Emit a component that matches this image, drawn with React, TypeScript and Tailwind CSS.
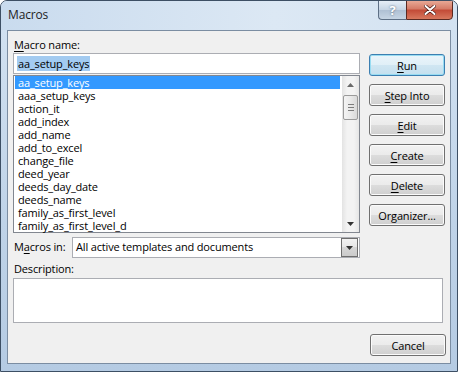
import React from 'react';

const items = [
  'aa_setup_keys',
  'aaa_setup_keys',
  'action_it',
  'add_index',
  'add_name',
  'add_to_excel',
  'change_file',
  'deed_year',
  'deeds_day_date',
  'deeds_name',
  'family_as_first_level',
  'family_as_first_level_d',
];

function U({ children }: { children: React.ReactNode }) {
  return <span className="underline decoration-1 underline-offset-[2px]">{children}</span>;
}

function Btn({ children, def }: { children: React.ReactNode; def?: boolean }) {
  return (
    <div
      className={
        def
          ? 'h-[22px] w-[76px] rounded-[3px] border border-[#3c7fb1] bg-[linear-gradient(to_bottom,#eaf5fb_0%,#e0eff7_50%,#d0e6f2_50%,#c4e0ef_100%)] shadow-[inset_0_0_0_1px_#98dcf2] flex items-center justify-center leading-none'
          : 'h-[22px] w-[76px] rounded-[3px] border border-[#707070] bg-[linear-gradient(to_bottom,#f2f2f2_0%,#ebebeb_50%,#dddddd_50%,#cfcfcf_100%)] shadow-[inset_0_0_0_1px_#fbfbfb] flex items-center justify-center leading-none'
      }
    >
      {children}
    </div>
  );
}

function ArrowDown() {
  return (
    <svg width="7" height="4" viewBox="0 0 7 4">
      <path d="M0 0 H7 L3.5 4 Z" fill="#333" />
    </svg>
  );
}

function ArrowUp() {
  return (
    <svg width="7" height="4" viewBox="0 0 7 4">
      <path d="M0 4 H7 L3.5 0 Z" fill="#6a6a6a" />
    </svg>
  );
}

export default function App() {
  return (
    <div className="w-[458px] h-[372px] overflow-hidden rounded-t-[7px] border border-[#3d4f64] bg-[linear-gradient(to_bottom,#d4e3f2,#bfd3e8_60%,#b5cbe3)] flex flex-col font-['Open_Sans',sans-serif] text-[11px] tracking-[-0.15px] text-black">
      {/* Title bar */}
      <div className="h-[29px] flex justify-between items-start bg-[linear-gradient(to_right,#c9dbee,#dce8f4_60%,#d3e2f1)]">
        <div className="pl-[7px] pt-[5px] text-[12px] leading-[18px] text-[#1e1e1e]">Macros</div>
        <div className="flex mr-[4px] -mt-[1px]">
          <div className="w-[28px] h-[20px] rounded-bl-[4px] border border-[#5d6f85] border-r-0 bg-[linear-gradient(to_bottom,#e6eef7,#c5d4e4_50%,#aebfd3_50%,#c6d5e4)] flex items-center justify-center text-[13px] font-bold text-white leading-none [text-shadow:0_0_2px_#4a5c70]">
            ?
          </div>
          <div className="w-[47px] h-[20px] rounded-br-[4px] border border-[#5a2a22] bg-[linear-gradient(to_bottom,#e8a895,#d47a66_45%,#c24a36_50%,#d8785e)] flex items-center justify-center">
            <svg width="12" height="10" viewBox="0 0 12 10">
              <path d="M1.5 1 L10.5 9 M10.5 1 L1.5 9" stroke="#4a1a14" strokeWidth="3.4" strokeLinecap="round" />
              <path d="M1.5 1 L10.5 9 M10.5 1 L1.5 9" stroke="#ffffff" strokeWidth="2" strokeLinecap="round" />
            </svg>
          </div>
        </div>
      </div>

      {/* Client area */}
      <div className="ml-[6px] w-[444px] h-[334px] border border-[#7b8da2] bg-[#f0f0f0] pl-[5px] pr-[4px] pt-[6px] flex flex-col">
        <div className="flex gap-[9px]">
          {/* Left column */}
          <div className="w-[347px] flex flex-col">
            <div className="h-[16px] leading-[16px] pl-[1px]">
              <U>M</U>acro name:
            </div>
            <div className="h-[21px] border border-[#abadb3] bg-white flex items-center pl-[3px]">
              <span className="bg-[#a3cbf1] leading-[15px] px-[1px]">aa_setup_keys</span>
            </div>
            <div className="mt-[1px] h-[158px] border border-[#828790] bg-white flex">
              <div className="flex-1 flex flex-col pl-[1px] pr-[2px]">
                {items.map((it, i) => (
                  <div
                    key={it}
                    className={
                      i === 0
                        ? 'h-[13px] leading-[13px] pl-[3px] bg-[#3399ff] text-white'
                        : 'h-[13px] leading-[13px] pl-[3px]'
                    }
                  >
                    {it}
                  </div>
                ))}
              </div>
              <div className="w-[17px] bg-[linear-gradient(to_right,#e3e3e3,#f3f3f3_30%,#f3f3f3_70%,#e6e6e6)] flex flex-col">
                <div className="h-[17px] flex items-center justify-center">
                  <ArrowUp />
                </div>
                <div className="mt-[2px] mx-[1px] h-[25px] rounded-[2px] border border-[#9a9a9a] bg-[linear-gradient(to_right,#f4f4f4,#e9e9e9_50%,#d9d9d9)] flex flex-col items-center justify-center gap-[2px]">
                  <div className="w-[6px] h-[1px] bg-[#7c7c7c]" />
                  <div className="w-[6px] h-[1px] bg-[#7c7c7c]" />
                  <div className="w-[6px] h-[1px] bg-[#7c7c7c]" />
                </div>
                <div className="flex-1" />
                <div className="h-[17px] flex items-center justify-center">
                  <ArrowDown />
                </div>
              </div>
            </div>
            <div className="mt-[4px] h-[21px] flex items-center">
              <div className="w-[59px] pl-[1px]">
                M<U>a</U>cros in:
              </div>
              <div className="flex-1 h-[21px] border border-[#abadb3] bg-white flex items-center justify-between pl-[3px] pr-[1px]">
                <span>All active templates and documents</span>
                <div className="w-[17px] h-[19px] border border-[#6e6e6e] bg-[linear-gradient(to_bottom,#f2f2f2,#e6e6e6_50%,#d6d6d6_50%,#cbcbcb)] flex items-center justify-center">
                  <ArrowDown />
                </div>
              </div>
            </div>
          </div>

          {/* Right column */}
          <div className="w-[76px] mt-[17px] flex flex-col gap-[8px]">
            <Btn def>
              <U>R</U>un
            </Btn>
            <Btn>
              <U>S</U>tep Into
            </Btn>
            <Btn>
              <U>E</U>dit
            </Btn>
            <Btn>
              <U>C</U>reate
            </Btn>
            <Btn>
              <U>D</U>elete
            </Btn>
            <Btn>
              Or<U>g</U>anizer...
            </Btn>
          </div>
        </div>

        <div className="mt-[3px] h-[16px] leading-[16px] pl-[1px]">Description:</div>
        <div className="mt-[1px] mr-[3px] h-[45px] border border-[#abadb3] bg-white" />
        <div className="mt-[11px] flex justify-end">
          <Btn>Cancel</Btn>
        </div>
      </div>
    </div>
  );
}
